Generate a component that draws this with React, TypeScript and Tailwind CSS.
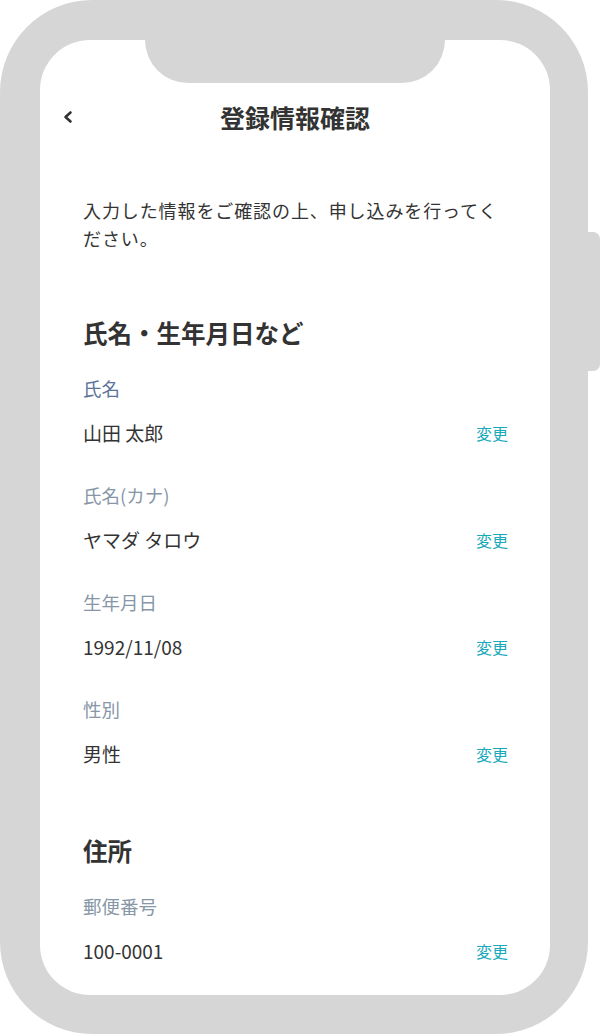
import React from 'react';

type Field = {
  label: string;
  value: string;
  active?: boolean;
};

type Section = {
  title: string;
  fields: Field[];
};

const sections: Section[] = [
  {
    title: '氏名・生年月日など',
    fields: [
      { label: '氏名', value: '山田 太郎', active: true },
      { label: '氏名(カナ)', value: 'ヤマダ タロウ' },
      { label: '生年月日', value: '1992/11/08' },
      { label: '性別', value: '男性' },
    ],
  },
  {
    title: '住所',
    fields: [{ label: '郵便番号', value: '100-0001' }],
  },
];

function FieldRow({ field }: { field: Field }) {
  return (
    <div className="flex flex-col">
      <div
        className={
          field.active
            ? 'text-[18.5px] leading-[28px] text-[#60739b]'
            : 'text-[18.5px] leading-[28px] text-[#8797a8]'
        }
      >
        {field.label}
      </div>
      <div className="mt-[17px] flex items-center justify-between">
        <span className="text-[19px] leading-[28px] text-[#333333]">{field.value}</span>
        <button className="text-[16px] leading-[28px] text-[#18a9ba]">変更</button>
      </div>
    </div>
  );
}

export default function App() {
  return (
    <div
      className="flex w-[600px] h-[1034px] bg-white items-start"
      style={{ fontFamily: '"Noto Sans CJK JP", "Noto Sans", sans-serif' }}
    >
      <div className="w-[588px] h-[1034px] bg-[#d6d6d6] rounded-[92px] pl-[40px] pr-[38px] pt-[40px] pb-[39px] flex">
        <div className="relative flex-1 bg-white rounded-[50px] overflow-hidden flex flex-col">
          {/* notch */}
          <div className="absolute top-0 left-[105px] w-[300px] h-[43px] bg-[#d6d6d6] rounded-b-[44px]" />

          <header className="mt-[49px] h-[56px] grid grid-cols-[1fr_auto_1fr] items-center">
            <div className="pl-[22px] flex items-center">
              <svg width="12" height="14" viewBox="0 0 12 14" fill="none">
                <path d="M8.5 2.5 L3.5 7 L8.5 11.5" stroke="#333333" strokeWidth="2.6" strokeLinecap="round" strokeLinejoin="round" />
              </svg>
            </div>
            <h1 className="text-[25px] leading-[36px] font-bold text-[#333333]">登録情報確認</h1>
            <div />
          </header>

          <div className="pl-[43px] pr-[42px] flex flex-col">
            <p className="mt-[51px] text-[18px] leading-[28px] text-[#333333] tracking-[0.05em]">
              入力した情報をご確認の上、申し込みを行ってください。
            </p>

            {sections.map((section, si) => (
              <section key={section.title} className={si === 0 ? 'mt-[63px]' : 'mt-[65px]'}>
                <h2 className="text-[24.5px] leading-[36px] font-bold text-[#333333]">{section.title}</h2>
                <div className="mt-[23px] flex flex-col gap-[34px]">
                  {section.fields.map((f) => (
                    <FieldRow key={f.label} field={f} />
                  ))}
                </div>
              </section>
            ))}
          </div>
        </div>
      </div>
      <div className="mt-[232px] w-[12px] h-[139px] bg-[#d6d6d6] rounded-r-[7px]" />
    </div>
  );
}
